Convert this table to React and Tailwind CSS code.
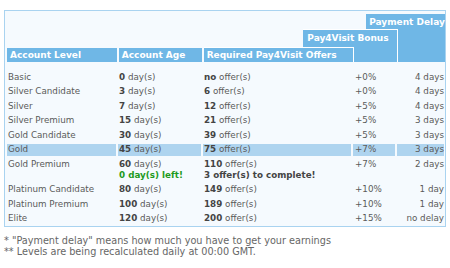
import React from 'react';

const levels = [
  { name: 'Basic', days: '0', offers: 'no', bonus: '+0%', delay: '4 days' },
  { name: 'Silver Candidate', days: '3', offers: '6', bonus: '+0%', delay: '4 days' },
  { name: 'Silver', days: '7', offers: '12', bonus: '+5%', delay: '4 days' },
  { name: 'Silver Premium', days: '15', offers: '21', bonus: '+5%', delay: '3 days' },
  { name: 'Gold Candidate', days: '30', offers: '39', bonus: '+5%', delay: '3 days' },
  { name: 'Gold', days: '45', offers: '75', bonus: '+7%', delay: '3 days', current: true },
  { name: 'Gold Premium', days: '60', offers: '110', bonus: '+7%', delay: '2 days', daysLeft: '0 day(s) left!', offersLeft: '3 offer(s) to complete!' },
  { name: 'Platinum Candidate', days: '80', offers: '149', bonus: '+10%', delay: '1 day' },
  { name: 'Platinum Premium', days: '100', offers: '189', bonus: '+10%', delay: '1 day' },
  { name: 'Elite', days: '120', offers: '200', bonus: '+15%', delay: 'no delay' },
];

export default function App() {
  return (
    <div className="w-[450px] h-[268px] bg-white pt-[10px] font-['DejaVu_Sans',sans-serif] text-[#5a5a5a]">
      <div className="ml-[4px] w-[442px] border border-[#a9d3f0] bg-[#f5fafe]">
        {/* stepped header */}
        <div className="flex items-end h-[51px] pl-[2px] text-[9px] font-bold text-white leading-[12px]">
          <div className="w-[110px] h-[14px] bg-[#6fb7e6] pl-[3px] pt-[1px]">Account Level</div>
          <div className="w-[83px] h-[14px] ml-[2px] bg-[#6fb7e6] pl-[3px] pt-[1px]">Account Age</div>
          <div className="relative z-30 w-[151px] h-[15px] ml-[2px] bg-[#6fb7e6] border-t border-r border-white pl-[3px] pt-[1px]">Required Pay4Visit Offers</div>
          <div className="relative z-20 w-[95px] h-[33px] ml-[-51px] bg-[#6fb7e6] border-t border-r border-white pl-[4px] pt-[2px]">Pay4Visit Bonus</div>
          <div className="relative z-10 w-[79px] h-[48px] ml-[-32px] bg-[#6fb7e6] pl-[3px] pt-[2px]">Payment Delay</div>
        </div>

        <table className="mt-[7px] mb-[-1px] w-full table-fixed border-separate border-spacing-[2px] text-[8.75px] leading-[11px]">
          <colgroup>
            <col className="w-[109px]" />
            <col className="w-[83px]" />
            <col className="w-[148px]" />
            <col className="w-[42px]" />
            <col className="w-[47px]" />
          </colgroup>
          <tbody>
            {levels.map((l) => {
              const cell = `py-[0.75px] align-top ${l.current ? 'bg-[#aed4ef]' : ''}`;
              return (
                <tr key={l.name}>
                  <td className={`${cell} pl-[1px]`}>{l.name}</td>
                  <td className={`${cell} pl-[1px]`}>
                    <span className="font-bold text-[#444]">{l.days}</span> day(s)
                    {l.daysLeft && <div className="font-bold text-[#1d9a1d]">{l.daysLeft}</div>}
                  </td>
                  <td className={`${cell} pl-[1px]`}>
                    <span className="font-bold text-[#444]">{l.offers}</span> offer(s)
                    {l.offersLeft && <div className="font-bold text-[#444] whitespace-nowrap">{l.offersLeft}</div>}
                  </td>
                  <td className={`${cell} pl-[2px]`}>{l.bonus}</td>
                  <td className={`${cell} text-right`}>{l.delay}</td>
                </tr>
              );
            })}
          </tbody>
        </table>
      </div>

      <div className="mt-[8px] pl-[4px] text-[9.7px] leading-[11px] text-[#666]">
        <p>* "Payment delay" means how much you have to get your earnings</p>
        <p>** Levels are being recalculated daily at 00:00 GMT.</p>
      </div>
    </div>
  );
}
